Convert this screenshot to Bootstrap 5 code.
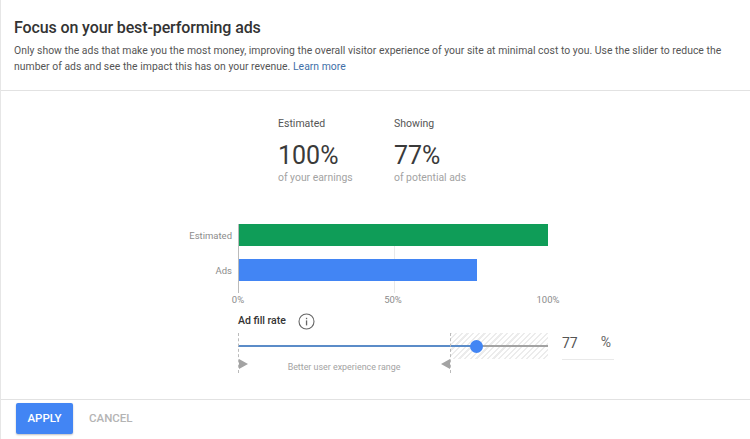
<!DOCTYPE html>
<html lang="en">
<head>
<meta charset="utf-8">
<title>Focus on your best-performing ads</title>
<link href="https://cdn.jsdelivr.net/npm/bootstrap@5.3.0/dist/css/bootstrap.min.css" rel="stylesheet">
<style>
html,body{height:439px;overflow:hidden;}
body{font-family:Roboto,"Liberation Sans",sans-serif;color:#333;background:#fff;border-left:1px solid #e6e6e6;}
.page-shell{height:439px;}
.head-area{height:91px;padding:18px 12px 0 13px;border-bottom:1px solid #e2e2e2;}
.head-title{font-size:16px;font-weight:500;line-height:20px;margin:0 0 5px;color:#333;letter-spacing:-.12px;}
.head-copy{font-size:10.4px;line-height:16px;letter-spacing:.025px;color:#555;margin:0;}
.head-copy a{color:#3f6fa8;text-decoration:none;}
.main-area{height:308px;}
.stats-row{padding:26px 0 0 277px;gap:41px;}
.stat-box{width:75px;white-space:nowrap;}
.stat-head{font-size:10.5px;line-height:14px;color:#555;}
.stat-num{font-size:25px;line-height:28px;margin-top:11px;color:#3a3a3a;}
.stat-sub{font-size:10.4px;line-height:14px;color:#a3a3a3;margin-top:1px;}
.chart-wrap{margin-top:39px;padding-left:167px;}
.cat-col{width:70px;padding-right:6px;text-align:right;font-size:9.5px;color:#8c8c8c;}
.cat-col div{height:22px;line-height:24px;}
.cat-col div+div{margin-top:13px;}
.plot-box{width:310px;height:69px;border-left:1px solid #bbb;position:relative;background:linear-gradient(#e9e9e9,#e9e9e9) 155px 0/1px 100% no-repeat;}
.bar-line{height:22px;}
.bar-line+.bar-line{margin-top:13px;}
.bar-green{background:#0f9d58;width:100%;}
.bar-blue{background:#4285f4;}
.tick-row{margin-left:237px;width:310px;height:14px;position:relative;font-size:9.5px;line-height:14px;color:#8c8c8c;}
.tick-row span{position:absolute;transform:translateX(-50%);}
.fill-head{padding-left:237px;margin-top:4px;height:20px;gap:12px;font-size:10.5px;font-weight:500;color:#333;}
.slider-row{margin-top:2px;padding-left:237px;}
.slider-box{width:310px;height:40px;position:relative;flex:none;}
.hatch-zone{position:absolute;left:212px;top:0;width:98px;height:26px;background:repeating-linear-gradient(135deg,#ececec 0 1.5px,#fff 1.5px 4px);}
.dash-mark{position:absolute;top:0;height:40px;border-left:1px dashed #bbb;}
.rail-grey{position:absolute;left:0;right:0;top:12px;height:2px;background:#a3a3a3;}
.rail-blue{position:absolute;left:0;top:12px;height:2px;background:#5b8cc8;}
.knob{position:absolute;top:6.5px;left:231.5px;width:13px;height:13px;border-radius:50%;background:#4285f4;}
.range-note{position:absolute;left:0;width:212px;top:28px;text-align:center;font-size:8.9px;line-height:12px;color:#a3a3a3;}
.arrow-mark{position:absolute;top:26px;}
.value-box{width:52px;height:27px;margin:0 0 0 14px;border-bottom:1px solid #e9e9e9;align-items:flex-start;justify-content:space-between;}
.value-num{font-size:14px;line-height:20px;color:#555;}
.value-unit{font-size:14px;line-height:18px;color:#666;margin-right:3px;}
.foot-area{height:40px;border-top:1px solid #e2e2e2;padding:3px 0 0 15px;gap:16px;}
.btn-apply{width:57px;height:31px;background:#4285f4;color:#fff;font-size:11.5px;font-weight:500;border:0;border-radius:2px;padding:1px 0 0;box-shadow:0 1px 2px rgba(0,0,0,.25);}
.btn-cancel{height:31px;padding:1px 0 0;border:0;background:none;color:#b4b4b4;font-size:11.5px;font-weight:500;}
</style>
</head>
<body>
<div class="page-shell d-flex flex-column">
  <header class="head-area">
    <h1 class="head-title">Focus on your best-performing ads</h1>
    <p class="head-copy">Only show the ads that make you the most money, improving the overall visitor experience of your site at minimal cost to you. Use the slider to reduce the number of ads and see the impact this has on your revenue. <a href="#">Learn more</a></p>
  </header>
  <main class="main-area">
    <div class="stats-row d-flex">
      <div class="stat-box">
        <div class="stat-head">Estimated</div>
        <div class="stat-num">100%</div>
        <div class="stat-sub">of your earnings</div>
      </div>
      <div class="stat-box">
        <div class="stat-head">Showing</div>
        <div class="stat-num">77%</div>
        <div class="stat-sub">of potential ads</div>
      </div>
    </div>
    <div class="chart-wrap d-flex">
      <div class="cat-col"><div>Estimated</div><div>Ads</div></div>
      <div class="plot-box">
        <div class="bar-line bar-green"></div>
        <div class="bar-line bar-blue" style="width:77%"></div>
      </div>
    </div>
    <div class="tick-row"><span style="left:0">0%</span><span style="left:50%">50%</span><span style="left:100%">100%</span></div>
    <div class="fill-head d-flex align-items-center">
      <span>Ad fill rate</span>
      <svg width="17" height="17" viewBox="0 0 17 17" fill="none" aria-hidden="true"><circle cx="8.5" cy="8.5" r="7.5" stroke="#666" stroke-width="1.1"/><rect x="7.9" y="7.4" width="1.3" height="5" fill="#666"/><rect x="7.9" y="4.8" width="1.3" height="1.4" fill="#666"/></svg>
    </div>
    <div class="slider-row d-flex align-items-start">
      <div class="slider-box">
        <div class="hatch-zone"></div>
        <div class="rail-grey"></div>
        <div class="rail-blue" style="width:77%"></div>
        <div class="dash-mark" style="left:0"></div>
        <div class="dash-mark" style="left:212px"></div>
        <div class="knob"></div>
        <svg class="arrow-mark" style="left:1px" width="9" height="10" viewBox="0 0 9 10" aria-hidden="true"><path d="M0 0 9 5 0 10Z" fill="#a3a3a3"/></svg>
        <svg class="arrow-mark" style="left:203px" width="9" height="10" viewBox="0 0 9 10" aria-hidden="true"><path d="M9 0 0 5 9 10Z" fill="#a3a3a3"/></svg>
        <div class="range-note">Better user experience range</div>
      </div>
      <div class="value-box d-flex">
        <span class="value-num">77</span>
        <span class="value-unit">%</span>
      </div>
    </div>
  </main>
  <footer class="foot-area d-flex align-items-start">
    <button type="button" class="btn btn-apply">APPLY</button>
    <button type="button" class="btn btn-cancel">CANCEL</button>
  </footer>
</div>
<script src="https://cdn.jsdelivr.net/npm/bootstrap@5.3.0/dist/js/bootstrap.bundle.min.js"></script>
</body>
</html>
